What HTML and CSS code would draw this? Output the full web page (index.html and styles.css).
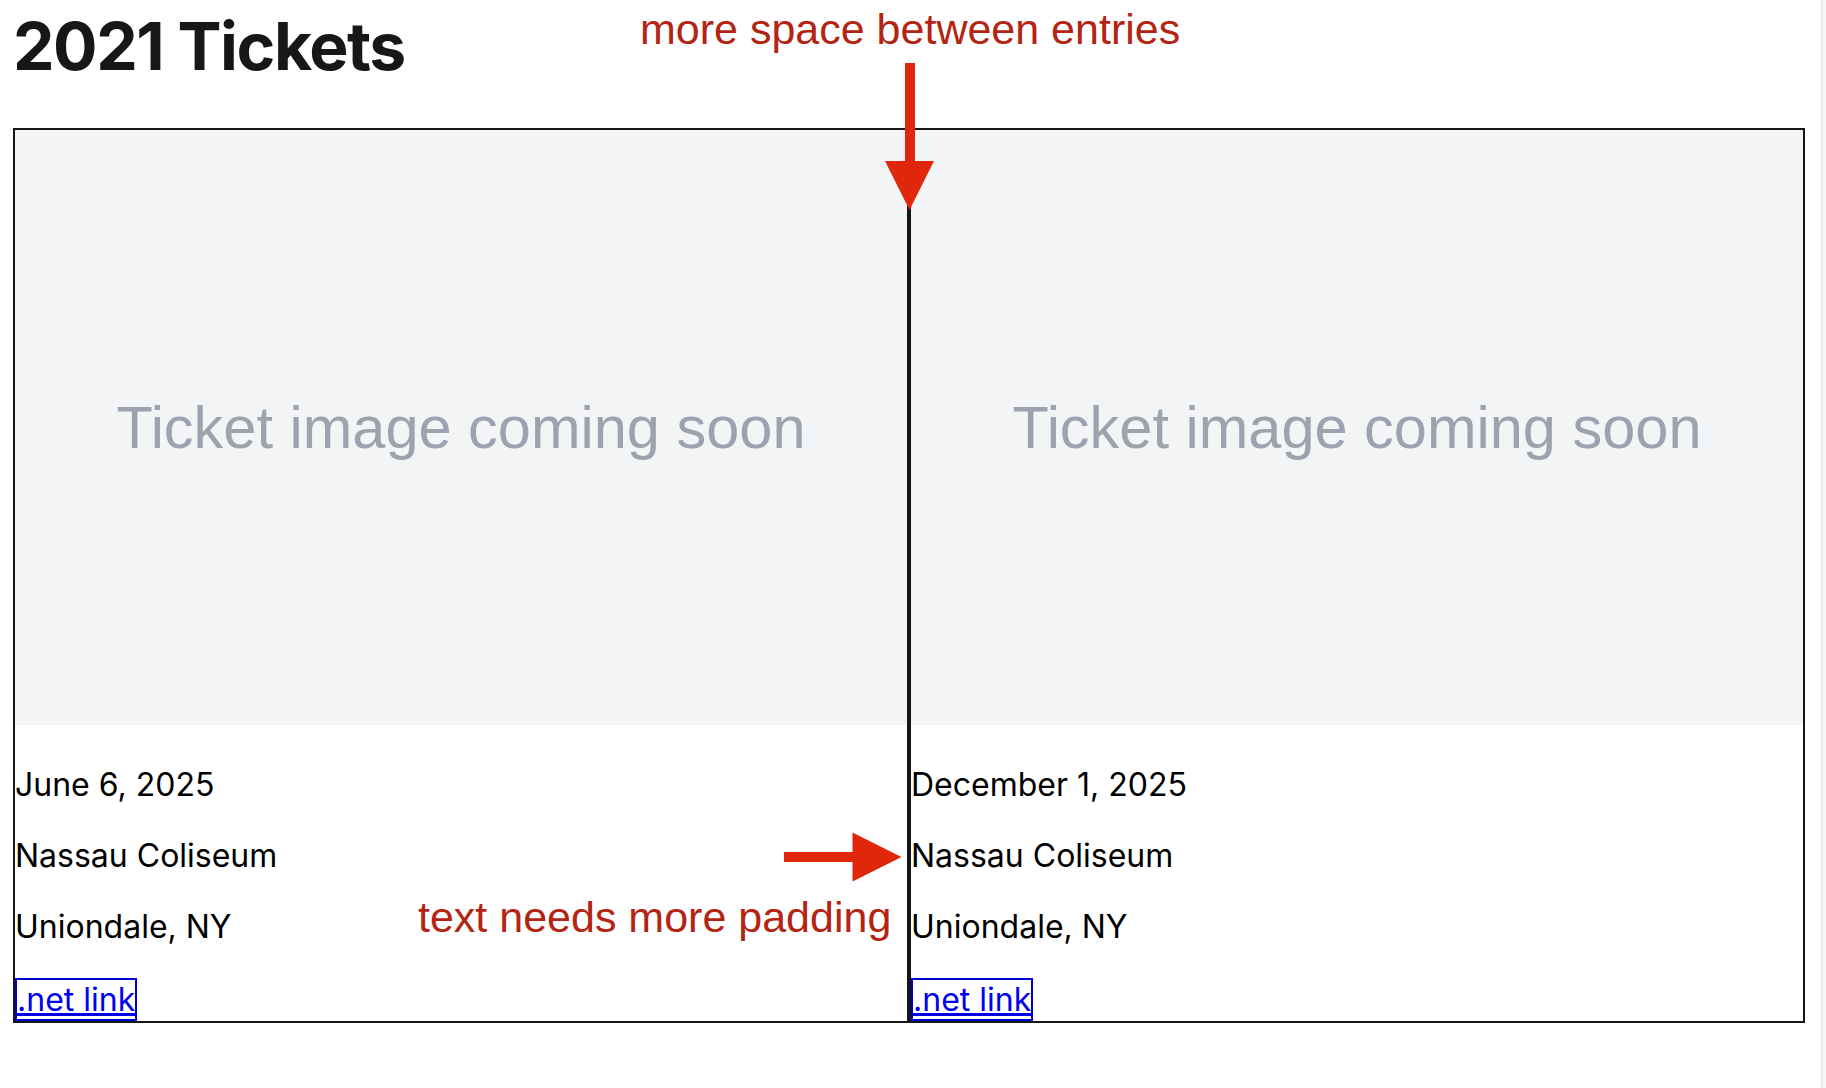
FILE: index.html
```html
<!DOCTYPE html>
<html lang="en">
<head>
<meta charset="utf-8">
<title>2021 Tickets</title>
<link rel="stylesheet" href="styles.css">
</head>
<body>
<main class="page">
  <h1 class="page-title">2021 Tickets</h1>
  <section class="ticket-grid">
    <article class="ticket">
      <div class="ticket-image"><span>Ticket image coming soon</span></div>
      <div class="ticket-info">
        <p>June 6, 2025</p>
        <p>Nassau Coliseum</p>
        <p>Uniondale, NY</p>
        <p><a class="ticket-link" href="#">.net link</a></p>
      </div>
    </article>
    <article class="ticket">
      <div class="ticket-image"><span>Ticket image coming soon</span></div>
      <div class="ticket-info">
        <p>December 1, 2025</p>
        <p>Nassau Coliseum</p>
        <p>Uniondale, NY</p>
        <p><a class="ticket-link" href="#">.net link</a></p>
      </div>
    </article>
  </section>
</main>

<div class="annotations">
  <span class="note note-top">more space between entries</span>
  <span class="note note-bottom">text needs more padding</span>
  <svg class="arrows" width="1826" height="1088" viewBox="0 0 1826 1088" xmlns="http://www.w3.org/2000/svg">
    <rect x="905" y="63" width="10" height="102" fill="#e0260b"/>
    <polygon points="885,161 934,161 909.5,210" fill="#e0260b"/>
    <rect x="784" y="852" width="72" height="10" fill="#e0260b"/>
    <polygon points="852.5,832.5 852.5,881.5 901.5,857" fill="#e0260b"/>
  </svg>
</div>
<div class="scrollbar"></div>
</body>
</html>
```

FILE: styles.css
```css
html, body {
  margin: 0;
  padding: 0;
  background: #ffffff;
}

body {
  font-family: "Inter", "Noto Sans", sans-serif;
  color: #000000;
}

.page {
  padding: 13px 21px 13px 13px;
}

.page-title {
  margin: 0 0 49px 0;
  font-size: 66px;
  line-height: 1;
  font-weight: 700;
  color: #171717;
  letter-spacing: -0.022em;
}

.ticket-grid {
  display: grid;
  grid-template-columns: 1fr 1fr;
  width: 1792px;
}

.ticket {
  border: 2px solid #161616;
}

.ticket-image {
  aspect-ratio: 3 / 2;
  background: #f3f4f6;
  display: flex;
  align-items: center;
  justify-content: center;
}

.ticket-image span {
  font-family: "Liberation Sans", Arial, sans-serif;
  font-size: 59.5px;
  color: #9ca3af;
}

.ticket-info {
  padding-top: 8px;
  font-size: 32px;
}

.ticket-info p {
  margin: 32px 0;
  line-height: normal;
}

.ticket-info p:last-child {
  margin-bottom: 0;
}

.ticket-link {
  display: inline-block;
  color: #0000ee;
  border: 2px solid #0000cc;
  text-decoration: underline;
}

.annotations {
  position: absolute;
  top: 0;
  left: 0;
  width: 1826px;
  height: 1088px;
  pointer-events: none;
}

.note {
  position: absolute;
  font-family: "Liberation Sans", Arial, sans-serif;
  font-size: 43px;
  line-height: 1;
  color: #b42412;
  white-space: nowrap;
}

.note-top {
  left: 640px;
  top: 8px;
}

.note-bottom {
  left: 418px;
  top: 896px;
}

.arrows {
  position: absolute;
  top: 0;
  left: 0;
}

.scrollbar {
  position: fixed;
  top: 0;
  right: 0;
  width: 3px;
  height: 100%;
  background: #f7f7f7;
  border-left: 2px solid #e8e8e8;
}
```
